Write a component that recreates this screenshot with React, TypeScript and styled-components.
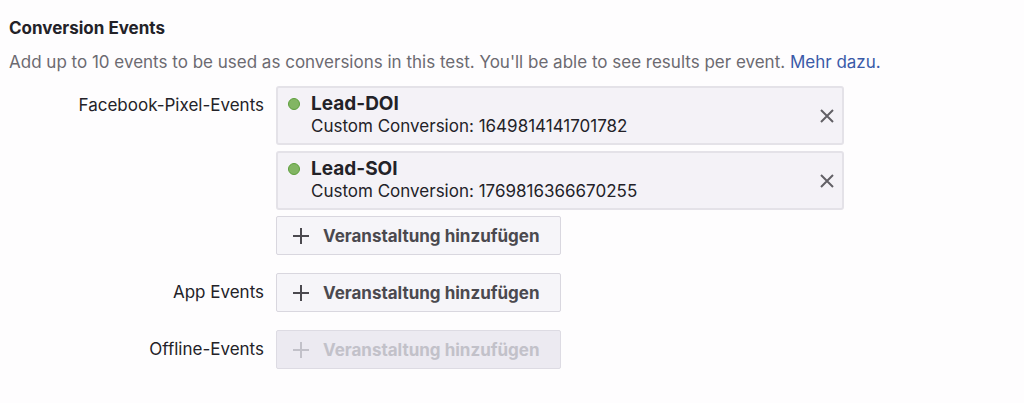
import React from "react";
import styled, { createGlobalStyle } from "styled-components";

const GlobalStyle = createGlobalStyle`
  *, *::before, *::after { box-sizing: border-box; }
  body {
    margin: 0;
    background: #fefdfe;
    color: #232228;
    font-family: Inter, "Liberation Sans", sans-serif;
    font-size: 17px;
    line-height: 24px;
  }
`;

const Section = styled.section`
  padding: 16px 9px 32px;
`;

const Title = styled.h2`
  margin: 0 0 10px;
  font-size: 17px;
  line-height: 24px;
  font-weight: 700;
`;

const Description = styled.p`
  margin: 0 0 12px;
  color: #6c6a71;
`;

const Link = styled.a`
  color: #3a5aa8;
  text-decoration: none;
  &:hover { text-decoration: underline; }
`;

const Groups = styled.div`
  display: flex;
  flex-direction: column;
  gap: 18px;
`;

const Group = styled.div`
  display: grid;
  grid-template-columns: 255px minmax(0, 568px);
  column-gap: 12px;
`;

const GroupLabel = styled.span`
  padding-top: 7px;
  text-align: right;
`;

const GroupContent = styled.div`
  display: flex;
  flex-direction: column;
  align-items: flex-start;
  gap: 6px;
`;

const EventList = styled.ul`
  display: flex;
  flex-direction: column;
  gap: 6px;
  width: 100%;
  margin: 0;
  padding: 0;
  list-style: none;
`;

const EventCard = styled.li`
  display: flex;
  align-items: flex-start;
  gap: 11px;
  padding: 5px 8px 5px 10px;
  border: 2px solid #e4e2e8;
  border-radius: 3px;
  background: #f4f2f7;
`;

const StatusDot = styled.span`
  flex: none;
  width: 12px;
  height: 12px;
  margin-top: 5px;
  border: 1px solid #5d9f3c;
  border-radius: 50%;
  background: #82b563;
`;

const EventText = styled.div`
  flex: 1;
  min-width: 0;
`;

const EventName = styled.div`
  font-size: 19px;
  line-height: 22px;
  font-weight: 700;
`;

const EventDetail = styled.div`
  font-size: 17px;
  line-height: 23px;
`;

const RemoveButton = styled.button`
  display: flex;
  align-self: center;
  padding: 4px 0;
  border: 0;
  background: none;
  color: #626066;
  cursor: pointer;
`;

const AddButton = styled.button`
  display: flex;
  align-items: center;
  gap: 13px;
  min-width: 285px;
  height: 39px;
  padding: 0 15px;
  border: 1px solid #d9d7df;
  border-radius: 2px;
  background: #f6f5f9;
  color: #4b494f;
  font: inherit;
  font-weight: 700;
  white-space: nowrap;
  cursor: pointer;

  &:disabled {
    border-color: #dddbe3;
    background: #eceaf1;
    color: #c2c1c9;
    cursor: default;
  }
`;

const Icon = styled.svg`
  display: block;
  flex: none;
  fill: none;
  stroke: currentColor;
  stroke-width: 2;
`;

interface PixelEvent {
  name: string;
  conversionId: string;
}

const pixelEvents: PixelEvent[] = [
  { name: "Lead-DOI", conversionId: "1649814141701782" },
  { name: "Lead-SOI", conversionId: "1769816366670255" },
];

function AddEvent({ labelId, disabled }: { labelId: string; disabled?: boolean }) {
  return (
    <AddButton type="button" disabled={disabled} aria-describedby={labelId}>
      <Icon width="18" height="18" viewBox="0 0 18 18" aria-hidden="true">
        <path d="M9 1v16M1 9h16" />
      </Icon>
      Veranstaltung hinzufügen
    </AddButton>
  );
}

export default function App() {
  return (
    <Section>
      <GlobalStyle />
      <Title>Conversion Events</Title>
      <Description>
        Add up to 10 events to be used as conversions in this test. You'll be able to see results per event.{" "}
        <Link href="#mehr">Mehr dazu.</Link>
      </Description>
      <Groups>
        <Group role="group" aria-labelledby="pixel-events">
          <GroupLabel id="pixel-events">Facebook-Pixel-Events</GroupLabel>
          <GroupContent>
            <EventList>
              {pixelEvents.map((event) => (
                <EventCard key={event.conversionId}>
                  <StatusDot />
                  <EventText>
                    <EventName>{event.name}</EventName>
                    <EventDetail>Custom Conversion: {event.conversionId}</EventDetail>
                  </EventText>
                  <RemoveButton type="button" aria-label={`${event.name} entfernen`}>
                    <Icon width="14" height="14" viewBox="0 0 14 14" aria-hidden="true">
                      <path d="M1 1l12 12M13 1L1 13" />
                    </Icon>
                  </RemoveButton>
                </EventCard>
              ))}
            </EventList>
            <AddEvent labelId="pixel-events" />
          </GroupContent>
        </Group>
        <Group role="group" aria-labelledby="app-events">
          <GroupLabel id="app-events">App Events</GroupLabel>
          <GroupContent>
            <AddEvent labelId="app-events" />
          </GroupContent>
        </Group>
        <Group role="group" aria-labelledby="offline-events">
          <GroupLabel id="offline-events">Offline-Events</GroupLabel>
          <GroupContent>
            <AddEvent labelId="offline-events" disabled />
          </GroupContent>
        </Group>
      </Groups>
    </Section>
  );
}
